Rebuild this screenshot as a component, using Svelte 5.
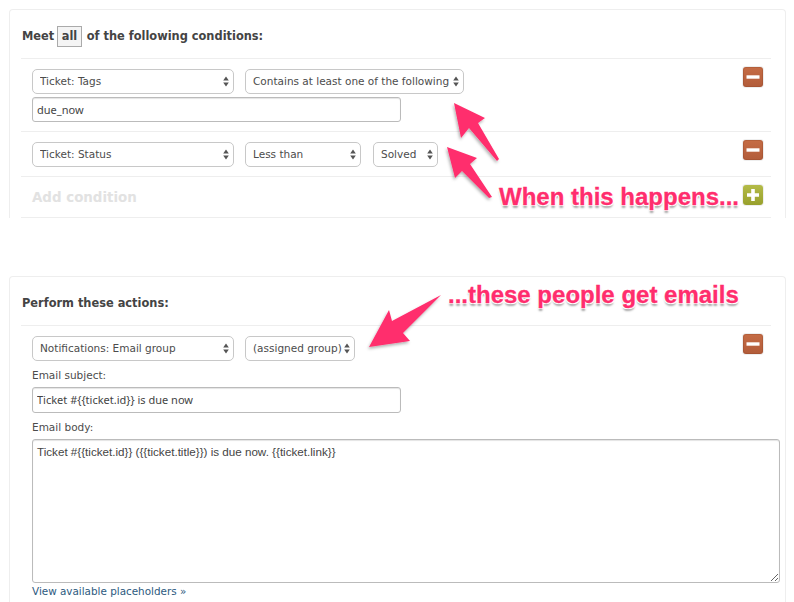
<script>
  const subject = "Ticket #{{ticket.id}} is due now";
  const body = "Ticket #{{ticket.id}} ({{ticket.title}}) is due now. {{ticket.link}}";
</script>

{#snippet choice(label, size)}
  <span class="select {size}">
    <select><option>{label}</option></select>
    <svg class="updown" width="6" height="11" viewBox="0 0 6 11" aria-hidden="true"><path d="M3 0.5 5.8 4.4H.2zM3 10.5 5.8 6.6H.2z" /></svg>
  </span>
{/snippet}

{#snippet minus()}
  <button class="tool minus" aria-label="Remove"><svg width="14" height="4" viewBox="0 0 14 4"><rect width="13" height="3.4" x=".5" y=".3" fill="#fff" /></svg></button>
{/snippet}

<main class="page">
  <section class="card first">
    <h2>Meet <span class="all">all</span> of the following conditions:</h2>
    <div class="row">
      <div class="fields">
        <div class="line">
          {@render choice("Ticket: Tags", "w202")}
          {@render choice("Contains at least one of the following", "w219")}
        </div>
        <input class="text" value="due_now" />
      </div>
      {@render minus()}
    </div>
    <div class="row">
      <div class="fields">
        <div class="line">
          {@render choice("Ticket: Status", "w202")}
          {@render choice("Less than", "w116")}
          {@render choice("Solved", "w64")}
        </div>
      </div>
      {@render minus()}
    </div>
    <div class="add">
      <span>Add condition</span>
      <button class="tool plus" aria-label="Add"><svg width="14" height="14" viewBox="0 0 14 14"><path d="M5.2 1h3.6v4.2H13v3.6H8.8V13H5.2V8.8H1V5.2h4.2z" fill="#fff" /></svg></button>
    </div>
  </section>

  <section class="card second">
    <h2>Perform these actions:</h2>
    <div class="row action">
      <div class="fields">
        <div class="line">
          {@render choice("Notifications: Email group", "w202")}
          {@render choice("(assigned group)", "w110")}
        </div>
        <label for="subject">Email subject:</label>
        <input id="subject" class="text tall" value={subject} />
        <label for="body">Email body:</label>
        <textarea id="body" value={body}></textarea>
        <a href="#placeholders">View available placeholders »</a>
      </div>
      {@render minus()}
    </div>
  </section>

  <svg class="arrows" width="794" height="602" viewBox="0 0 794 602" aria-hidden="true">
    <defs>
      <filter id="soft" x="-20%" y="-20%" width="140%" height="140%">
        <feDropShadow dx="-1" dy="2" stdDeviation="1.4" flood-color="#000" flood-opacity=".3" />
      </filter>
    </defs>
    <g fill="#ff2d6d" filter="url(#soft)">
      <path d="M454 103 485 118 478 123 499 159 497 161 469 128 461 138z" />
      <path d="M447 147 477 158 470 164 492 197 489 198 462 171 455 178z" />
      <path d="M369 347 389 310 392 321 441 295 403 333 410 341z" />
    </g>
  </svg>
  <p class="note when">When this happens...</p>
  <p class="note these">...these people get emails</p>
</main>

<style>
  :global(body) {
    margin: 0;
    background: #fff;
  }
  .page {
    position: relative;
    width: 794px;
    height: 602px;
    overflow: hidden;
    padding: 9px 0 0 9px;
    box-sizing: border-box;
    font-family: "DejaVu Sans", sans-serif;
    font-size: 10.5px;
    color: #4c4c4c;
  }
  .card {
    width: 777px;
    box-sizing: border-box;
    padding: 0 14px 0 11px;
    border: 1px solid #eee;
    border-bottom: 0;
    border-radius: 4px 4px 0 0;
  }
  .first { height: 209px; }
  .second {
    margin-top: 58px;
    height: 400px;
  }
  h2 {
    display: flex;
    align-items: center;
    gap: 4px;
    height: 49px;
    margin: 0;
    box-sizing: border-box;
    padding: 4px 0 0 1px;
    border-bottom: 1px solid #eee;
    font-size: 11.4px;
    font-weight: 700;
    color: #444;
  }
  .all {
    box-sizing: border-box;
    height: 21px;
    margin: 0 1px 0 -1px;
    padding: 0 3.5px;
    line-height: 19px;
    border: 1px solid #aaa;
    background: #f4f4f4;
  }
  .row {
    display: flex;
    justify-content: space-between;
    align-items: flex-start;
    padding: 10px 8px 9px 11px;
    border-bottom: 1px solid #eee;
  }
  .action { border-bottom: 0; }
  .action .fields {
    flex: 1;
    min-width: 0;
  }
  .fields {
    display: flex;
    flex-direction: column;
    align-items: flex-start;
  }
  .line {
    display: flex;
    gap: 11px;
  }
  .select {
    position: relative;
    display: block;
    height: 25px;
  }
  .w202 { width: 202px; }
  .w219 { width: 219px; }
  .w116 { width: 116px; }
  .w64 { width: 65px; margin-left: 1px; }
  .w110 { width: 110px; }
  select {
    appearance: none;
    width: 100%;
    height: 100%;
    box-sizing: border-box;
    padding: 0 0 2px 7px;
    border: 1px solid #c8c8c8;
    border-radius: 5px;
    background: #fff;
    font: inherit;
    color: #4c4c4c;
  }
  .updown {
    position: absolute;
    top: 7px;
    right: 5px;
    fill: #555;
    pointer-events: none;
  }
  .text {
    width: 369px;
    height: 25px;
    margin-top: 3px;
    box-sizing: border-box;
    padding: 0 4px 1px;
    border: 1px solid #bbb;
    border-radius: 3px;
    box-shadow: inset 0 1px 1px #e4e4e4;
    font-family: "Noto Sans", sans-serif;
    font-size: 11px;
    line-height: 18px;
    color: #444;
  }
  .tall {
    height: 26px;
    margin-top: 5px;
    padding-bottom: 2px;
  }
  label {
    margin-top: 7px;
    height: 14px;
    line-height: 14px;
  }
  textarea {
    display: block;
    width: 748px;
    height: 144px;
    margin-top: 5px;
    box-sizing: border-box;
    padding: 4px;
    resize: both;
    border: 1px solid #bbb;
    border-radius: 3px;
    box-shadow: inset 0 1px 1px #e4e4e4;
    font-family: "Liberation Sans", Arial, sans-serif;
    font-size: 11.65px;
    line-height: 15px;
    color: #444;
  }
  a {
    margin-top: 2px;
    font-size: 10.4px;
    color: #2d5a80;
    text-decoration: none;
  }
  .add {
    display: flex;
    justify-content: space-between;
    align-items: flex-start;
    height: 41px;
    box-sizing: border-box;
    padding: 8px 8px 0 11px;
    border-bottom: 1px solid #eee;
    font-size: 13.4px;
    font-weight: 700;
    color: #e2e2e2;
  }
  .add span { margin-top: 5px; }
  .tool {
    display: flex;
    align-items: center;
    justify-content: center;
    width: 20px;
    height: 20px;
    margin: -2px 0 0;
    padding: 0;
    border: 0;
    border-radius: 3px;
    box-shadow: 0 0 0 1px #eee, inset 0 0 0 1px rgba(130, 60, 30, .25);
  }
  .minus { background: linear-gradient(#c56c45, #b25c3a); }
  .plus {
    margin-top: 0;
    background: linear-gradient(#b4bb48, #98a02c);
    box-shadow: 0 0 0 1px #eee;
  }
  .arrows {
    position: absolute;
    inset: 0;
    pointer-events: none;
  }
  .note {
    position: absolute;
    margin: 0;
    font-family: "Liberation Sans", Arial, sans-serif;
    font-size: 24px;
    font-weight: 700;
    line-height: 28px;
    white-space: nowrap;
    color: #ff2d6d;
    -webkit-text-stroke: .3px #ff2d6d;
    text-shadow: 1px 0 #fff, -1px 0 #fff, 0 -1px #fff, 0 1px #fff, 1px 1px #fff, -1px 1px #fff, 1px -1px #fff, -1px -1px #fff, 0 3px 2px rgba(0, 0, 0, .35);
  }
  .when { left: 499px; top: 183px; }
  .these { left: 448px; top: 281px; }
</style>
